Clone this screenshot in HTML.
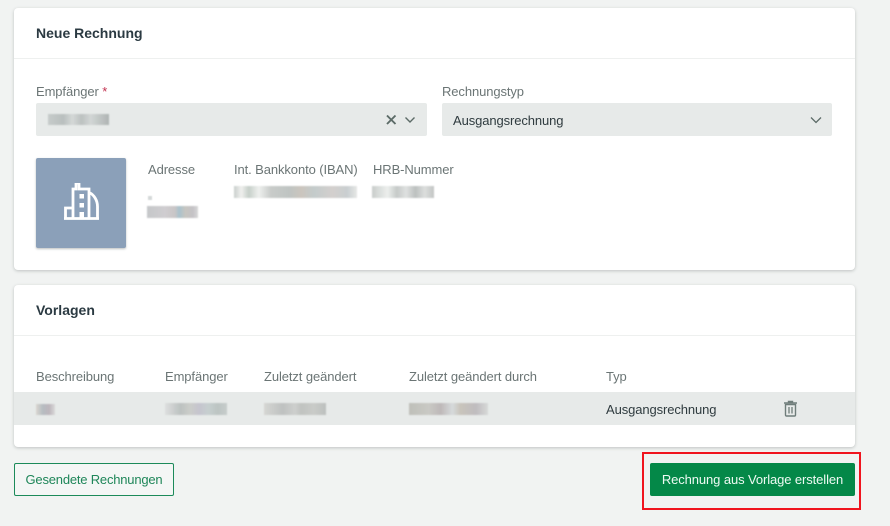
<!DOCTYPE html>
<html lang="de">
<head>
<meta charset="utf-8">
<style>
html,body{margin:0;padding:0}
body{width:890px;height:526px;background:#f1f3f2;position:relative;overflow:hidden;font-family:"Liberation Sans",sans-serif;font-size:13px;color:#2c3a3a}
.a{position:absolute;white-space:nowrap}
.card{position:absolute;left:14px;width:841px;background:#fff;border-radius:4px;box-shadow:0 1px 3px rgba(60,70,70,.28)}
.line{position:absolute;left:14px;width:841px;height:1px;background:#eef0ef}
.h{font-size:14px;font-weight:bold;color:#2b3a42;line-height:18px}
.l{color:#6b7575;line-height:16px;letter-spacing:-.1px}
.v{color:#2f3b3f;line-height:16px;letter-spacing:-.1px}
.sel{position:absolute;top:103px;height:33px;background:#e7eae9;border-radius:2px}
.b{position:absolute;filter:blur(.9px);height:8px}
</style>
</head>
<body>
<div class="card" style="top:8px;height:262px"></div>
<div class="line" style="top:58px"></div>
<div class="a h" style="left:36px;top:24px">Neue Rechnung</div>

<div class="a l" style="left:36px;top:84px">Empfänger <span style="color:#c2314f">*</span></div>
<div class="sel" style="left:36px;width:391px"></div>
<div class="b" style="left:48px;top:114px;width:61px;height:11px;background:linear-gradient(90deg,#c6cbca 0,#b9bfbe 25%,#d4d8d7 40%,#bcc1c0 55%,#d2d6d5 70%,#aeb4b3 100%)"></div>
<svg class="a" style="left:385px;top:113px" width="34" height="14" viewBox="0 0 34 14" fill="none"><path d="M2 2.500l8.500 8.500M10.500 2.500L2 11" stroke="#5c6b67" stroke-width="1.900"/><path d="M20.500 4.500l4.500 4.500 4.500-4.500" stroke="#5c6b67" stroke-width="1.400"/></svg>

<div class="a l" style="left:442px;top:84px">Rechnungstyp</div>
<div class="sel" style="left:442px;width:390px"></div>
<div class="a v" style="left:453px;top:113px">Ausgangsrechnung</div>
<svg class="a" style="left:809px;top:114px" width="14" height="12" viewBox="0 0 14 12" fill="none"><path d="M2 3.500l5 5 5-5" stroke="#5c6b67" stroke-width="1.300"/></svg>

<div class="a" style="left:36px;top:158px;width:90px;height:90px;background:#8ba0b9;border-radius:2px;box-shadow:0 1px 2px rgba(60,70,70,.35)"></div>
<svg class="a" style="left:64px;top:183px" width="35" height="37" viewBox="0 0 35 37" fill="none">
<path d="M1.500 35V25h7M9 35V6h3V0h3v6h10v29M25 9.500c5 2 8.500 8 8.500 14V35M0 35.500h35" stroke="#fff" stroke-width="2.800"/>
<path d="M15.500 11h4.500v4.500h-4.500zM15.500 20h4.500v4.500h-4.500zM15.500 29h4.500v6h-4.500z" fill="#fff"/>
</svg>

<div class="a l" style="left:148px;top:162px">Adresse</div>
<div class="a l" style="left:234px;top:162px">Int. Bankkonto (IBAN)</div>
<div class="a l" style="left:373px;top:162px">HRB-Nummer</div>
<div class="b" style="left:234px;top:186px;width:123px;height:12px;background:linear-gradient(90deg,#c8cfcc 0,#f0f0ee 6%,#c6cfc9 12%,#eef0ee 20%,#c8cbc9 30%,#bfc4c2 45%,#cbc5be 55%,#c3cbcb 65%,#d3cfcd 80%,#c9ced0 92%,#e6e8e6 100%)"></div>
<div class="b" style="left:372px;top:186px;width:62px;height:12px;background:linear-gradient(90deg,#c9cdcb 0,#ecefed 25%,#c5c9c8 40%,#dfe1e0 55%,#bcc0bf 70%,#dcdedd 85%,#c2c5c4 100%)"></div>
<div class="b" style="left:148px;top:196px;width:4px;height:4px;background:#d5d9d9;filter:blur(.6px)"></div>
<div class="b" style="left:147px;top:206px;width:51px;height:12px;background:linear-gradient(90deg,#c5c7c9 0,#cfcdd0 35%,#c9c5c6 55%,#a9c2cc 63%,#c6c5c0 75%,#c4c2c6 90%,#d8d8d8 100%)"></div>

<div class="card" style="top:285px;height:162px"></div>
<div class="line" style="top:335px"></div>
<div class="a h" style="left:36px;top:301px">Vorlagen</div>

<div class="a l" style="left:36px;top:369px">Beschreibung</div>
<div class="a l" style="left:165px;top:369px">Empfänger</div>
<div class="a l" style="left:264px;top:369px">Zuletzt geändert</div>
<div class="a l" style="left:409px;top:369px">Zuletzt geändert durch</div>
<div class="a l" style="left:606px;top:369px">Typ</div>

<div class="a" style="left:14px;top:392px;width:841px;height:33px;background:#e7eae9"></div>
<div class="b" style="left:36px;top:404px;width:19px;height:11px;background:linear-gradient(90deg,#d9d6cf 0,#b6bcc1 35%,#bdb6bc 70%,#d9d9d9 100%)"></div>
<div class="b" style="left:165px;top:403px;width:62px;height:12px;background:linear-gradient(90deg,#dddfde 0,#bcc1c0 25%,#cbcdc9 40%,#c5c4ce 55%,#c6cfcf 70%,#bcc4c2 85%,#c6cccb 100%)"></div>
<div class="b" style="left:264px;top:403px;width:62px;height:12px;background:linear-gradient(90deg,#d5d6d3 0,#bec1c0 30%,#cdcfcd 50%,#c0c3c0 60%,#c9cbc8 80%,#bcc0be 100%)"></div>
<div class="b" style="left:409px;top:403px;width:79px;height:12px;background:linear-gradient(90deg,#bebfb9 0,#c9c9c4 25%,#bdb8b8 40%,#d6dadb 55%,#c8c4bb 65%,#bfbcbf 85%,#d6d9d8 100%)"></div>
<div class="a v" style="left:606px;top:402px">Ausgangsrechnung</div>
<svg class="a" style="left:783px;top:400px" width="15" height="17" viewBox="0 0 15 17" fill="none">
<path d="M2.500 4.500h10V15a1 1 0 0 1-1 1h-8a1 1 0 0 1-1-1z" stroke="#6f7d7a" stroke-width="1.400"/>
<path d="M1 3h13M5.500 3V1.500h4V3" stroke="#6f7d7a" stroke-width="1.400"/>
<path d="M6 7v6.500M9 7v6.500" stroke="#6f7d7a" stroke-width="1.300"/>
</svg>

<div class="a" style="left:14px;top:463px;width:158px;height:31px;border:1px solid #1c8a5a;border-radius:2px;background:#f4f6f5;color:#1f8659;text-align:center;line-height:32px;letter-spacing:-.2px">Gesendete Rechnungen</div>
<div class="a" style="left:650px;top:463px;width:205px;height:33px;background:#048848;border-radius:2px;color:#eefaf3;text-align:center;line-height:33px;letter-spacing:-.1px">Rechnung aus Vorlage erstellen</div>
<div class="a" style="left:642px;top:452px;width:215px;height:54px;border:2px solid #f0141e"></div>
</body>
</html>
